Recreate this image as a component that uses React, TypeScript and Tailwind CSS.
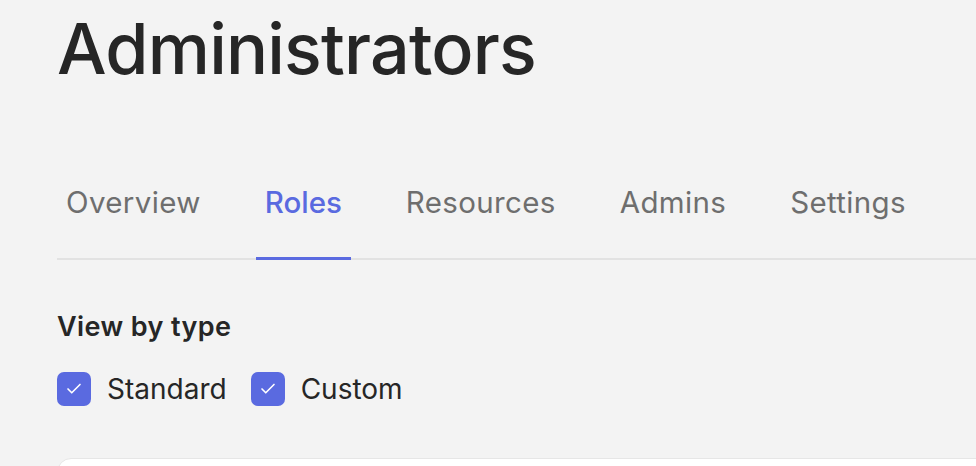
import { Check } from 'lucide-react';

const TABS = ['Overview', 'Roles', 'Resources', 'Admins', 'Settings'];
const ACTIVE = 'Roles';

export default function App() {
  return (
    <div className="h-screen bg-[#f3f3f3] font-['Inter',sans-serif] text-[#262626] pl-[57px] overflow-hidden">
      <h1 className="text-[70px] leading-none font-medium tracking-[-0.8px] pt-[14px]">Administrators</h1>

      <nav className="mt-[104px] flex gap-[46px] border-b-2 border-[#e2e2e2]">
        {TABS.map(t => (
          <button
            key={t}
            className={`px-[9px] pb-[39px] text-[29.5px] leading-none -mb-[2px] border-b-[3px] ${
              t === ACTIVE
                ? 'text-[#5a6ae0] font-medium border-[#5a6ae0]'
                : 'text-[#6e6e6e] border-transparent tracking-[0.35px]'
            }`}
          >
            {t}
          </button>
        ))}
      </nav>

      <h2 className="mt-[53px] text-[27px] leading-none font-semibold tracking-[0.4px]">View by type</h2>

      <div className="mt-[32px] flex items-center gap-[24px]">
        <Checkbox label="Standard" />
        <Checkbox label="Custom" />
      </div>

      <div className="mt-[52px] w-[1000px] h-[200px] bg-white border border-[#e6e6e6] rounded-[14px]" />
    </div>
  );
}

function Checkbox({ label }: { label: string }) {
  return (
    <label className="flex items-center gap-[16px]">
      <span className="w-[34px] h-[34px] rounded-[7px] bg-[#5a6ae0] flex items-center justify-center">
        <Check className="w-[18px] h-[18px] text-white" strokeWidth={2.2} />
      </span>
      <span className="text-[28px] leading-none">{label}</span>
    </label>
  );
}
